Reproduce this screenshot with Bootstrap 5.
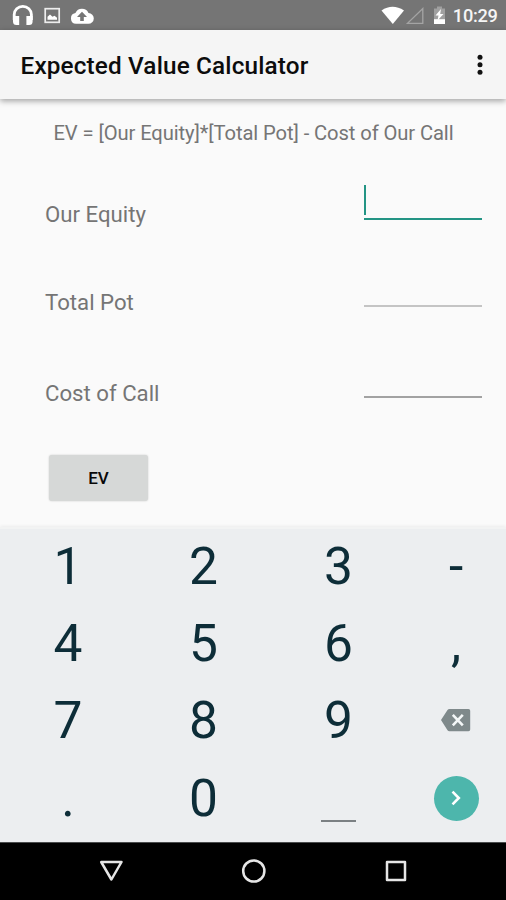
<!DOCTYPE html>
<html lang="en">
<head>
<meta charset="utf-8">
<meta name="viewport" content="width=device-width, initial-scale=1">
<title>Expected Value Calculator</title>
<link href="https://cdn.jsdelivr.net/npm/bootstrap@5.3.0/dist/css/bootstrap.min.css" rel="stylesheet">
<style>
body { font-family: Roboto, "Noto Sans", sans-serif; background: #fafafa; color: #757575; }
svg { display: block; }
.screen { width: 506px; height: 900px; }
.statusbar { height: 30px; background: #757575; padding: 2px 8.5px 0 12px; }
.clock { font-size: 18.2px; font-weight: 500; line-height: 28px; color: #f6f6f6; letter-spacing: -.3px; }
.appbar { height: 69px; background: #f5f5f5; padding: 3px 16px 0 20.5px; box-shadow: 0 2px 6px rgba(0,0,0,.36); z-index: 1; }
.app-title { font-size: 24.3px; font-weight: 500; line-height: 29px; color: #0c0c0c; letter-spacing: .16px; padding-bottom: 2px; }
.calc { height: 428px; }
.formula { height: 67px; font-size: 20.2px; line-height: 68px; letter-spacing: -.1px; padding-left: 1px; white-space: nowrap; }
.field { padding: 0 24px 0 45px; font-size: 22.2px; line-height: 30px; }
.field-equity { height: 97px; padding-top: 33px; }
.field-pot { height: 92px; padding-top: 24px; }
.field-cost { height: 88px; padding-top: 23px; }
.entry { width: 118px; height: 0; border-radius: 0; }
.entry-pot { margin-top: 18px; border-bottom: 2px solid #c4c4c4; }
.entry-cost { margin-top: 18px; border-bottom: 2px solid #a2a2a2; }
.entry-active { height: 35px; margin-top: -14px; border-bottom: 2.5px solid #239484; }
.caret { width: 2px; height: 30px; background: #239484; }
.ev-btn { margin: 12px 0 0 49px; width: 99px; height: 46px; padding: 1px 0 0; border: 0; border-radius: 3px; background: #d6d8d7; color: #080808; font-size: 17px; font-weight: 500; box-shadow: 0 0 2px rgba(0,0,0,.2); }
.keypad { height: 315px; background: #eceef0; border-top: 2px solid #f2f3f3; display: grid; grid-template-columns: 136px 135px 135px 100px; grid-template-rows: 75px 78px 77px 79px; color: #0d2d38; font-size: 51.5px; line-height: 77px; box-shadow: 0 -1px 3px rgba(0,0,0,.06); }
.key { display: flex; align-items: center; justify-content: center; }
.key-icon { padding-bottom: 1px; }
.space-mark { width: 35px; height: 2px; background: #7b8083; margin-top: 45px; }
.go { width: 45px; height: 45px; background: #4db6ac; }
.navkeys { height: 58px; background: #000; border-top: 1px solid #4a4c4d; padding: 0 98px 1px; }
</style>
</head>
<body>
<div class="screen d-flex flex-column overflow-hidden">
  <div class="statusbar d-flex align-items-center justify-content-between flex-shrink-0">
    <div class="d-flex align-items-center">
      <svg width="84" height="28" viewBox="12 0 84 28">
        <path d="M14.200 18V12.500a8.600 8.200 0 0 1 17.200 0V18" fill="none" stroke="#fff" stroke-width="2.800"/>
        <path d="M13 14h6.200v9h-2.700q-3.500 0-3.500-3.500zM26.400 14h6.200v5.500q0 3.500-3.500 3.500h-2.700z" fill="#fff"/>
        <rect x="45.200" y="6.700" width="14" height="13.600" fill="none" stroke="#ededed" stroke-width="1.700"/>
        <path d="M47.500 17.800v-3l2.500-2.300 2.500 2.300 2-1 2.500 2v2z" fill="#fff"/>
        <path d="M76 21.800a5.400 5.400 0 0 1-.6-10.700A7.200 7.200 0 0 1 88.500 11a5.300 5.300 0 0 1-.2 10.800z" fill="#fff"/>
        <path d="M82 9.800l5 5.300h-3.200v4h-3.600v-4H77z" fill="#757575"/>
      </svg>
    </div>
    <div class="d-flex align-items-center">
      <svg width="72" height="28" viewBox="380 0 72 28">
        <path d="M380.500 8.500q11-7.500 22.500 0L391.800 22z" fill="#fff"/>
        <path d="M421.800 6.500v14.800h-15.300z" fill="none" stroke="#a4a4a4" stroke-width="1.300"/>
        <path d="M433 6.500h3V4.500h5v2h3V18h-11z" fill="#a0a0a0"/>
        <path d="M433 17.200h11V22h-11z" fill="#fff"/>
        <path d="M440 7l-5.500 6.500h3l-1 5 6-6.500h-3.300z" fill="#fff"/>
      </svg>
      <span class="clock">10:29</span>
    </div>
  </div>

  <header class="appbar d-flex align-items-center justify-content-between flex-shrink-0 position-relative">
    <h1 class="app-title mb-0">Expected Value Calculator</h1>
    <svg width="20" height="24" viewBox="0 0 20 24" fill="#111"><circle cx="10" cy="3.200" r="2.500"/><circle cx="10" cy="10.700" r="2.500"/><circle cx="10" cy="18.200" r="2.500"/></svg>
  </header>

  <main class="calc flex-shrink-0">
    <div class="formula text-center">EV = [Our Equity]*[Total Pot] - Cost of Our Call</div>
    <div class="field field-equity d-flex justify-content-between">
      <span>Our Equity</span><div class="entry entry-active"><div class="caret"></div></div>
    </div>
    <div class="field field-pot d-flex justify-content-between">
      <span>Total Pot</span><div class="entry entry-pot"></div>
    </div>
    <div class="field field-cost d-flex justify-content-between">
      <span>Cost of Call</span><div class="entry entry-cost"></div>
    </div>
    <button class="btn ev-btn d-block" type="button">EV</button>
  </main>

  <div class="keypad flex-shrink-0">
    <div class="key">1</div><div class="key">2</div><div class="key">3</div><div class="key">-</div>
    <div class="key">4</div><div class="key">5</div><div class="key">6</div><div class="key">,</div>
    <div class="key">7</div><div class="key">8</div><div class="key">9</div>
    <div class="key key-icon">
      <svg width="30" height="24" viewBox="0 0 30 24"><path d="M8.500 1H27.500a1.700 1.700 0 0 1 1.700 1.700V21.500a1.700 1.700 0 0 1-1.700 1.700H8.500q-1.300 0-2-1L0 12.100 6.500 2q.7-1 2-1z" fill="#7f898b"/><path d="M11.800 6.800l10 10.500M21.800 6.800l-10 10.500" stroke="#f4f7f8" stroke-width="2.600"/></svg>
    </div>
    <div class="key">.</div><div class="key">0</div>
    <div class="key"><div class="space-mark"></div></div>
    <div class="key key-icon"><div class="go rounded-circle d-flex align-items-center justify-content-center">
      <svg width="12" height="16" viewBox="0 0 12 16"><path d="M2.500 1.700L8.800 8l-6.300 6.300" fill="none" stroke="#fff" stroke-width="2.600"/></svg>
    </div></div>
  </div>

  <nav class="navkeys d-flex align-items-center justify-content-between flex-shrink-0">
    <svg width="26" height="26" viewBox="0 0 26 26" fill="none" stroke="#e6e6e6" stroke-width="2.500" stroke-linejoin="round"><path d="M3.200 4H23.500L13.400 21.500z"/></svg>
    <svg width="26" height="26" viewBox="0 0 26 26" fill="none" stroke="#e6e6e6" stroke-width="2.500"><circle cx="13.800" cy="13" r="10.600"/></svg>
    <svg width="26" height="26" viewBox="0 0 26 26" fill="none" stroke="#e6e6e6" stroke-width="2.500" stroke-linejoin="round"><rect x="5" y="4" width="18" height="18"/></svg>
  </nav>
</div>
<script src="https://cdn.jsdelivr.net/npm/bootstrap@5.3.0/dist/js/bootstrap.bundle.min.js"></script>
</body>
</html>
